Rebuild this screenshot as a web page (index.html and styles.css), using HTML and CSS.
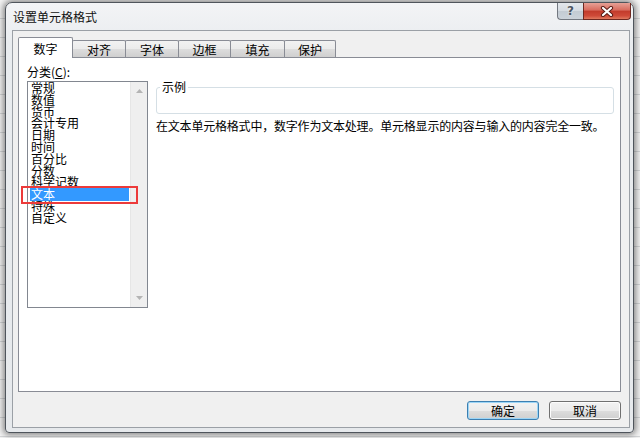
FILE: index.html
```html
<!DOCTYPE html>
<html lang="zh-CN">
<head>
<meta charset="utf-8">
<title>设置单元格格式</title>
<link rel="stylesheet" href="styles.css">
</head>
<body>
<div class="window">
  <div class="titlebar">
    <span class="title">设置单元格格式</span>
    <div class="caption">
      <span class="cbtn help">?</span>
      <span class="cbtn close">
        <svg width="14" height="11" viewBox="0 0 14 11">
          <path d="M3 2 L11 9 M11 2 L3 9" stroke="#5b1d16" stroke-width="4.2" stroke-linecap="round" fill="none"/>
          <path d="M3 2 L11 9 M11 2 L3 9" stroke="#ffffff" stroke-width="2.2" stroke-linecap="round" fill="none"/>
        </svg>
      </span>
    </div>
  </div>
  <div class="client">
    <div class="tabs">
      <span class="tab active">数字</span>
      <span class="tab">对齐</span>
      <span class="tab">字体</span>
      <span class="tab">边框</span>
      <span class="tab">填充</span>
      <span class="tab">保护</span>
    </div>
    <div class="panel">
      <div class="left">
        <div class="label">分类(<u>C</u>):</div>
        <div class="listbox">
          <ul class="items">
            <li>常规</li>
            <li>数值</li>
            <li>货币</li>
            <li>会计专用</li>
            <li>日期</li>
            <li>时间</li>
            <li>百分比</li>
            <li>分数</li>
            <li>科学记数</li>
            <li class="sel">文本</li>
            <li>特殊</li>
            <li>自定义</li>
          </ul>
          <div class="vscroll">
            <svg class="arrow" width="7" height="4" viewBox="0 0 7 4"><polygon points="0,4 3.5,0 7,4" fill="#b4b4b4"/></svg>
            <svg class="arrow" width="7" height="4" viewBox="0 0 7 4"><polygon points="0,0 7,0 3.5,4" fill="#b4b4b4"/></svg>
          </div>
        </div>
      </div>
      <div class="right">
        <fieldset class="sample">
          <legend>示例</legend>
          <div class="sample-body"></div>
        </fieldset>
        <p class="desc">在文本单元格格式中，数字作为文本处理。单元格显示的内容与输入的内容完全一致。</p>
      </div>
    </div>
    <div class="buttons">
      <button class="btn default">确定</button>
      <button class="btn">取消</button>
    </div>
  </div>
</div>
</body>
</html>
```
FILE: styles.css
```css
* { box-sizing: border-box; }

html, body {
  margin: 0;
  width: 640px;
  height: 438px;
  overflow: hidden;
}

body {
  padding: 2px 0 0 5px;
  font-family: "Noto Sans CJK SC", "Liberation Sans", sans-serif;
  font-size: 12px;
  color: #000;
  background-color: #f4f4f4;
  background-image: repeating-linear-gradient(to bottom, transparent 0, transparent 18px, #d4d6d8 18px, #d4d6d8 19px);
}

.window {
  width: 629px;
  height: 431px;
  border: 1px solid #4f555c;
  border-radius: 7px 7px 4px 4px;
  background: linear-gradient(to bottom, #f3f4f6 0, #e9ecef 40px, #e6e9ec 100%);
  box-shadow: 0 0 6px 2px rgba(0, 0, 0, 0.45);
  display: flex;
  flex-direction: column;
}

.titlebar {
  height: 27px;
  display: flex;
  align-items: flex-start;
  padding-left: 7px;
}

.title {
  line-height: 27px;
  font-size: 12px;
  color: #111;
}

.caption {
  margin-left: auto;
  margin-right: 2px;
  display: flex;
}

.cbtn {
  height: 17px;
  display: flex;
  align-items: center;
  justify-content: center;
}

.help {
  width: 26px;
  border: 1px solid #737880;
  border-top: none;
  border-right: none;
  border-radius: 0 0 0 4px;
  background: linear-gradient(to bottom, #e3e7eb 0, #d5dbe1 50%, #c3cbd3 51%, #ccd3da 100%);
  font-weight: bold;
  font-size: 12px;
  line-height: 16px;
  color: #4c5560;
  text-shadow: 0 0 2px #ffffff;
  font-family: "DejaVu Sans", sans-serif;
}

.close {
  width: 48px;
  border: 1px solid #6e2820;
  border-top: none;
  border-radius: 0 0 4px 0;
  background: linear-gradient(to bottom, #e7a196 0, #d86b5d 45%, #c23b2b 50%, #cf4a38 80%, #e07a5f 100%);
}

.client {
  flex: 1;
  margin: 0 3px 4px 6px;
  border: 1px solid #9ba0a6;
  background: #f0f0f0;
  padding: 6px 8px 7px 5px;
  display: flex;
  flex-direction: column;
}

.tabs {
  height: 20px;
  display: flex;
  align-items: flex-end;
  position: relative;
  z-index: 1;
}

.tab {
  height: 17px;
  border: 1px solid #898c95;
  border-bottom: none;
  border-radius: 2px 2px 0 0;
  background: linear-gradient(to bottom, #f2f2f2 0, #ebebeb 50%, #dddddd 51%, #cfcfcf 100%);
  text-align: center;
  line-height: 16px;
  padding-top: 1px;
  margin-left: -1px;
  width: 53px;
}

.tab:nth-child(2) { width: 54px; }
.tab:nth-child(3) { width: 54px; }
.tab:nth-child(4) { width: 53px; }
.tab:nth-child(5) { width: 55px; }
.tab:nth-child(6) { width: 52px; }

.tab.active {
  margin-left: 0;
  width: 55px;
  height: 21px;
  margin-bottom: -1px;
  background: #ffffff;
  padding-top: 3px;
  position: relative;
  z-index: 2;
}

.panel {
  height: 335px;
  border: 1px solid #898c95;
  background: #ffffff;
  padding: 7px 6px 0 8px;
  display: flex;
  gap: 8px;
}

.left {
  width: 121px;
  flex: none;
}

.label {
  height: 14px;
  line-height: 14px;
}

.label u {
  text-decoration: underline;
  text-underline-offset: 1px;
}

.listbox {
  margin-top: 2px;
  height: 227px;
  border: 1px solid #828790;
  display: flex;
  background: #ffffff;
}

.items {
  list-style: none;
  margin: 0;
  padding: 0 1px 0 2px;
  flex: 1;
}

.items li {
  height: 11.8px;
  line-height: 11.8px;
  font-size: 12px;
  padding-left: 1px;
  white-space: nowrap;
}

.items li.sel {
  background: #3399ff;
  color: #ffffff;
  box-shadow: 0 1px 0 0 #3399ff;
  position: relative;
}

.items li.sel::after {
  content: "";
  position: absolute;
  left: -9px;
  right: -9px;
  top: -2px;
  bottom: -4px;
  border: 2.5px solid #ec3a3a;
}

.vscroll {
  width: 17px;
  flex: none;
  background: #efefef;
  border-left: 1px solid #e6e6e6;
  display: flex;
  flex-direction: column;
  justify-content: space-between;
  align-items: center;
  padding: 7px 0 7px 0;
}

.arrow { display: block; }

.right {
  flex: 1;
}

.sample {
  margin: 15px 0 0 0;
  padding: 0;
  border: 1px solid #d5dfe5;
  border-radius: 3px;
  width: 458px;
}

.sample legend {
  margin-left: 3px;
  padding: 0 2px;
  line-height: 14px;
  font-size: 12px;
}

.sample-body {
  height: 19px;
}

.desc {
  margin: 5px 0 0 0;
  line-height: 14px;
  white-space: nowrap;
  letter-spacing: -0.2px;
}

.buttons {
  margin-top: 9px;
  display: flex;
  justify-content: flex-end;
  gap: 10px;
}

.btn {
  width: 72px;
  height: 19px;
  padding: 0;
  font-family: inherit;
  font-size: 12px;
  line-height: 17px;
  color: #000;
  border: 1px solid #707070;
  border-radius: 3px;
  background: linear-gradient(to bottom, #f2f2f2 0, #ebebeb 50%, #dddddd 51%, #cfcfcf 100%);
  box-shadow: inset 0 0 0 1px #fcfcfc;
}

.btn.default {
  border-color: #3c7fb1;
  box-shadow: inset 0 0 0 1px #9cd5f6;
}
```
